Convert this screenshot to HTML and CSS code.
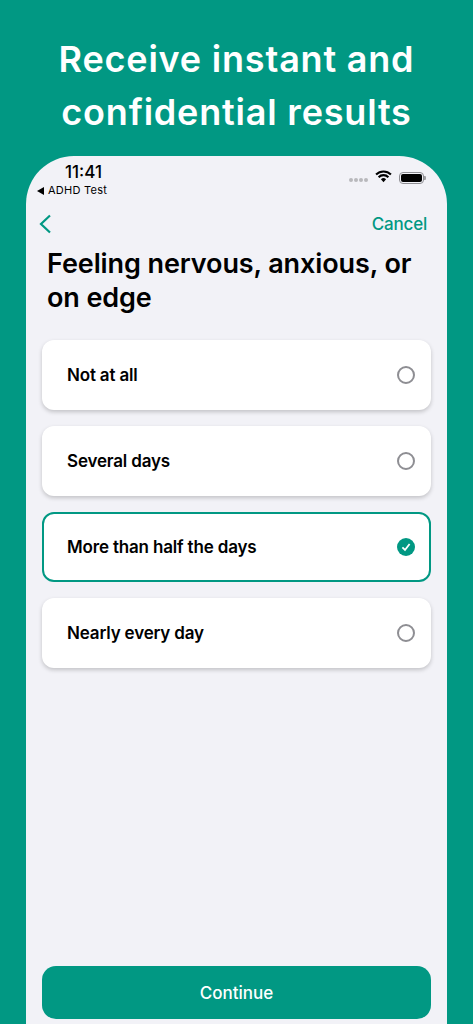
FILE: index.html
```html
<!DOCTYPE html>
<html lang="en">
<head>
<meta charset="utf-8">
<title>ADHD Test</title>
<link rel="stylesheet" href="styles.css">
</head>
<body>
<div class="page">
  <h1 class="headline">Receive instant and confidential results</h1>
  <main class="phone">
    <div class="status">
      <div class="status-left">
        <div class="time">11:41</div>
        <div class="back-app"><span class="tri"></span>ADHD Test</div>
      </div>
      <div class="status-right">
        <span class="dots"><i></i><i></i><i></i><i></i></span>
        <svg class="wifi" width="17" height="13" viewBox="0 0 16 12"><path d="M1 4.2a10 10 0 0 1 14 0M3.4 6.6a6.6 6.6 0 0 1 9.2 0" fill="none" stroke="#000" stroke-width="2"/><path d="M5.6 8.6a3.4 3.4 0 0 1 4.8 0L8 11.4z" fill="#000"/></svg>
        <span class="battery"><span class="fill"></span></span>
      </div>
    </div>
    <nav class="nav">
      <svg class="chev" width="13" height="20" viewBox="0 0 13 20"><path d="M11 1.5 2 10l9 8.5" fill="none" stroke="#019883" stroke-width="2.2"/></svg>
      <span class="cancel">Cancel</span>
    </nav>
    <h2 class="question">Feeling nervous, anxious, or on edge</h2>
    <div class="options">
      <div class="option"><span>Not at all</span><span class="radio"></span></div>
      <div class="option"><span>Several days</span><span class="radio"></span></div>
      <div class="option selected"><span>More than half the days</span>
        <svg class="check" width="18" height="18" viewBox="0 0 18 18"><circle cx="9" cy="9" r="9" fill="#019883"/><path d="M5.4 9.4 8 12l4.6-6" fill="none" stroke="#fff" stroke-width="1.8"/></svg>
      </div>
      <div class="option"><span>Nearly every day</span><span class="radio"></span></div>
    </div>
    <button class="continue">Continue</button>
  </main>
</div>
</body>
</html>
```
FILE: styles.css
```css
* { box-sizing: border-box; }
html, body { margin: 0; height: 100%; }
body { background: #019883; font-family: Inter, "Liberation Sans", sans-serif; overflow: hidden; }
.page { height: 1024px; display: flex; flex-direction: column; align-items: center; }
.headline {
  margin: 33px 0 0;
  width: 430px;
  height: 123px;
  color: #fff;
  font-size: 36px;
  line-height: 53px;
  font-weight: 600;
  text-align: center;
  letter-spacing: 0.8px;
}
.phone {
  width: 421px;
  height: 868px;
  background: #f2f2f7;
  border-radius: 48px 48px 0 0;
  padding: 0 16px;
  display: flex;
  flex-direction: column;
}
.status { height: 44px; display: flex; justify-content: space-between; padding-top: 7px; flex: none; }
.status-left { margin-left: -6px; }
.time { font-size: 17px; font-weight: 500; line-height: 18px; padding-left: 29px; color: #000; }
.back-app { font-size: 11px; line-height: 15px; margin-top: 2px; color: #000; display: flex; align-items: center; letter-spacing: 0.25px; }
.tri { width: 0; height: 0; border: 4px solid transparent; border-right: 7px solid #000; border-left: 0; margin-right: 4px; margin-left: 1px; }
.status-right { display: flex; align-items: flex-start; gap: 7px; padding-top: 9px; margin-right: 7px; }
.dots { display: flex; gap: 1px; margin-top: 6px; margin-right: 0; }
.dots i { width: 4px; height: 4px; border-radius: 50%; background: #b9b9bc; }
.wifi { margin-top: -2px; }
.battery { width: 25px; height: 12px; border: 1px solid #8e8e93; border-radius: 4px; padding: 1px; position: relative; }
.battery .fill { display: block; height: 100%; background: #000; border-radius: 2px; }
.battery::after { content: ""; position: absolute; right: -3px; top: 3px; width: 2px; height: 4px; background: #a0a0a4; border-radius: 0 1px 1px 0; }
.nav { height: 30px; margin-top: 9px; display: flex; justify-content: space-between; align-items: center; flex: none; }
.chev { margin-left: -3px; }
.cancel { color: #019883; font-size: 17px; font-weight: 500; margin-right: 4px; letter-spacing: -0.2px; }
.question {
  margin: 8px 0 0 5px;
  font-size: 27px;
  line-height: 34px;
  font-weight: 600;
  color: #000;
  width: 380px;
  flex: none;
  letter-spacing: -0.1px;
}
.options { margin-top: 25px; display: flex; flex-direction: column; gap: 16px; flex: none; }
.option {
  height: 70px;
  background: #fff;
  border-radius: 12px;
  box-shadow: 0 2px 4px rgba(0, 0, 0, 0.2);
  padding: 0 16px 0 25px;
  display: flex;
  align-items: center;
  justify-content: space-between;
  font-size: 17px;
  font-weight: 600;
  color: #000;
  letter-spacing: -0.17px;
}
.option.selected { border: 2px solid #019883; box-shadow: none; padding: 0 14px 0 23px; }
.radio { width: 18px; height: 18px; border: 2px solid #8e8e93; border-radius: 50%; }
.continue {
  margin-top: auto;
  margin-bottom: 5px;
  height: 53px;
  border: 0;
  border-radius: 14px;
  background: #019883;
  color: #fff;
  font: 500 17px Inter, "Liberation Sans", sans-serif;
  flex: none;
}
```
